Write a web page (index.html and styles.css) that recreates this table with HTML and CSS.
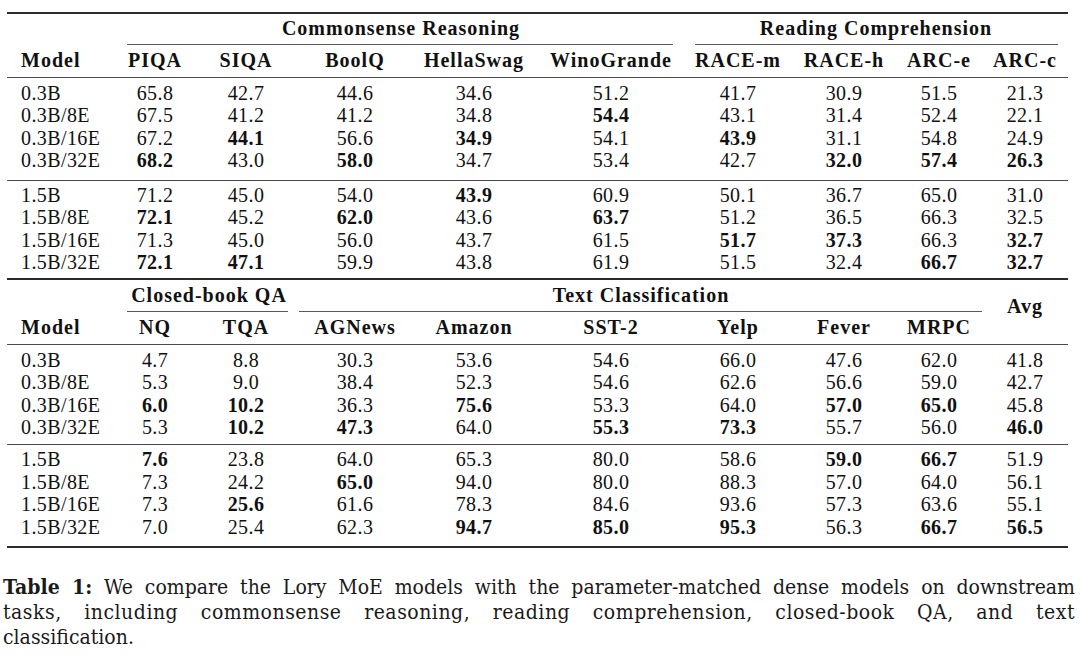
FILE: index.html
```html
<!DOCTYPE html>
<html lang="en">
<head>
<meta charset="utf-8">
<title>Table 1</title>
<link rel="stylesheet" href="styles.css">
</head>
<body>
<div class="page">
  <div class="tbl t1">
    <div class="rule thick top"></div>
    <div class="grid head">
      <div class="grp g-cs">Commonsense Reasoning</div>
      <div class="grp g-rc">Reading Comprehension</div>
      <div class="cmid cm-cs"></div>
      <div class="cmid cm-rc"></div>
      <div class="hd m">Model</div>
      <div class="hd">PIQA</div>
      <div class="hd">SIQA</div>
      <div class="hd">BoolQ</div>
      <div class="hd">HellaSwag</div>
      <div class="hd">WinoGrande</div>
      <div class="hd">RACE-m</div>
      <div class="hd">RACE-h</div>
      <div class="hd">ARC-e</div>
      <div class="hd">ARC-c</div>
    </div>
    <div class="rule mid after-head"></div>
    <div class="body">
      <div class="grid row"><span class="m">0.3B</span><span>65.8</span><span>42.7</span><span>44.6</span><span>34.6</span><span>51.2</span><span>41.7</span><span>30.9</span><span>51.5</span><span>21.3</span></div>
      <div class="grid row"><span class="m">0.3B/8E</span><span>67.5</span><span>41.2</span><span>41.2</span><span>34.8</span><b>54.4</b><span>43.1</span><span>31.4</span><span>52.4</span><span>22.1</span></div>
      <div class="grid row"><span class="m">0.3B/16E</span><span>67.2</span><b>44.1</b><span>56.6</span><b>34.9</b><span>54.1</span><b>43.9</b><span>31.1</span><span>54.8</span><span>24.9</span></div>
      <div class="grid row"><span class="m">0.3B/32E</span><b>68.2</b><span>43.0</span><b>58.0</b><span>34.7</span><span>53.4</span><span>42.7</span><b>32.0</b><b>57.4</b><b>26.3</b></div>
    </div>
    <div class="rule mid between"></div>
    <div class="body">
      <div class="grid row"><span class="m">1.5B</span><span>71.2</span><span>45.0</span><span>54.0</span><b>43.9</b><span>60.9</span><span>50.1</span><span>36.7</span><span>65.0</span><span>31.0</span></div>
      <div class="grid row"><span class="m">1.5B/8E</span><b>72.1</b><span>45.2</span><b>62.0</b><span>43.6</span><b>63.7</b><span>51.2</span><span>36.5</span><span>66.3</span><span>32.5</span></div>
      <div class="grid row"><span class="m">1.5B/16E</span><span>71.3</span><span>45.0</span><span>56.0</span><span>43.7</span><span>61.5</span><b>51.7</b><b>37.3</b><span>66.3</span><b>32.7</b></div>
      <div class="grid row"><span class="m">1.5B/32E</span><b>72.1</b><b>47.1</b><span>59.9</span><span>43.8</span><span>61.9</span><span>51.5</span><span>32.4</span><b>66.7</b><b>32.7</b></div>
    </div>
    <div class="rule thick bottom1"></div>
  </div>

  <div class="tbl t2">
    <div class="grid head">
      <div class="grp g-cb">Closed-book QA</div>
      <div class="grp g-tc">Text Classification</div>
      <div class="hd avg">Avg</div>
      <div class="cmid cm-cb"></div>
      <div class="cmid cm-tc"></div>
      <div class="hd m">Model</div>
      <div class="hd">NQ</div>
      <div class="hd">TQA</div>
      <div class="hd">AGNews</div>
      <div class="hd">Amazon</div>
      <div class="hd">SST-2</div>
      <div class="hd">Yelp</div>
      <div class="hd">Fever</div>
      <div class="hd">MRPC</div>
    </div>
    <div class="rule mid after-head2"></div>
    <div class="body">
      <div class="grid row"><span class="m">0.3B</span><span>4.7</span><span>8.8</span><span>30.3</span><span>53.6</span><span>54.6</span><span>66.0</span><span>47.6</span><span>62.0</span><span>41.8</span></div>
      <div class="grid row"><span class="m">0.3B/8E</span><span>5.3</span><span>9.0</span><span>38.4</span><span>52.3</span><span>54.6</span><span>62.6</span><span>56.6</span><span>59.0</span><span>42.7</span></div>
      <div class="grid row"><span class="m">0.3B/16E</span><b>6.0</b><b>10.2</b><span>36.3</span><b>75.6</b><span>53.3</span><span>64.0</span><b>57.0</b><b>65.0</b><span>45.8</span></div>
      <div class="grid row"><span class="m">0.3B/32E</span><span>5.3</span><b>10.2</b><b>47.3</b><span>64.0</span><b>55.3</b><b>73.3</b><span>55.7</span><span>56.0</span><b>46.0</b></div>
    </div>
    <div class="rule mid between2"></div>
    <div class="body">
      <div class="grid row"><span class="m">1.5B</span><b>7.6</b><span>23.8</span><span>64.0</span><span>65.3</span><span>80.0</span><span>58.6</span><b>59.0</b><b>66.7</b><span>51.9</span></div>
      <div class="grid row"><span class="m">1.5B/8E</span><span>7.3</span><span>24.2</span><b>65.0</b><span>94.0</span><span>80.0</span><span>88.3</span><span>57.0</span><span>64.0</span><span>56.1</span></div>
      <div class="grid row"><span class="m">1.5B/16E</span><span>7.3</span><b>25.6</b><span>61.6</span><span>78.3</span><span>84.6</span><span>93.6</span><span>57.3</span><span>63.6</span><span>55.1</span></div>
      <div class="grid row"><span class="m">1.5B/32E</span><span>7.0</span><span>25.4</span><span>62.3</span><b>94.7</b><b>85.0</b><b>95.3</b><span>56.3</span><b>66.7</b><b>56.5</b></div>
    </div>
    <div class="rule thick bottom2"></div>
  </div>

  <p class="caption">
    <span class="cl full l1"><b>Table 1:</b> We compare the Lory MoE models with the parameter-matched dense models on downstream</span>
    <span class="cl full l2">tasks, including commonsense reasoning, reading comprehension, closed-book QA, and text</span>
    <span class="cl l3">classification.</span>
  </p>
</div>
</body>
</html>
```

FILE: styles.css
```css
* {
  box-sizing: border-box;
  margin: 0;
  padding: 0;
}

html,
body {
  background: #ffffff;
}

body {
  margin: 0;
  width: 1080px;
  height: 658px;
  overflow: hidden;
  color: #111111;
  font-family: "Liberation Serif", "Times New Roman", serif;
}

.page {
  padding-top: 12px;
}

.tbl {
  width: 1061px;
  margin-left: 7px;
  font-size: 20px;
  letter-spacing: 0.4px;
}

.grid {
  display: grid;
  grid-template-columns: 111px 74px 108px 110px 128px 146px 108px 104px 86px 86px;
}

.rule {
  width: 100%;
}

.rule.thick {
  height: 2px;
  background: #2b2b2b;
}

.rule.mid {
  height: 1px;
  background: #4a4a4a;
}

.cmid {
  height: 1px;
  background: #5a5a5a;
  grid-row: 3;
}

/* header blocks */
.head {
  grid-template-rows: 22.5px 4.5px 1px 4px 22.5px;
  margin-top: 3px;
}

.t2 .head {
  margin-top: 3.8px;
  grid-template-rows: 22.5px 5px 1px 4px 22.5px;
}

.grp {
  grid-row: 1;
  text-align: center;
  font-weight: 700;
  letter-spacing: 1px;
  line-height: 22.5px;
  white-space: nowrap;
}

.hd {
  grid-row: 5;
  text-align: center;
  font-weight: 700;
  letter-spacing: 1px;
  line-height: 22.5px;
  white-space: nowrap;
}

.hd.m {
  text-align: left;
  padding-left: 14px;
}

.g-cs { grid-column: 2 / 7; }
.g-rc { grid-column: 7 / 11; }
.cm-cs { grid-column: 2 / 7; margin: 0 11px 0 9px; }
.cm-rc { grid-column: 7 / 11; margin: 0 10px 0 11px; }

.g-cb { grid-column: 2 / 4; }
.g-tc { grid-column: 4 / 10; }
.cm-cb { grid-column: 2 / 4; margin: 0 12px 0 9px; }
.cm-tc { grid-column: 4 / 10; margin: 0 0 0 -1px; }

.hd.avg {
  grid-column: 10;
  grid-row: 1 / 6;
  align-self: start;
  margin-top: 10.8px;
}

.after-head { margin-top: 5.5px; }
.after-head2 { margin-top: 4.7px; }

.body {
  margin-top: 3.5px;
}

.between { margin-top: 8px; }
.between + .body { margin-top: 3px; }

.between2 { margin-top: 5.7px; }
.between2 + .body { margin-top: 3.1px; }

.after-head2 + .body { margin-top: 4.1px; }

.bottom1 { margin-top: 4.6px; }
.bottom2 { margin-top: 8px; }

.row {
  height: 22.5px;
  line-height: 22.5px;
  white-space: nowrap;
}

.row > span,
.row > b {
  text-align: center;
}

.row > b {
  font-weight: 700;
}

.row > .m {
  text-align: left;
  padding-left: 14px;
}

/* caption */
.caption {
  margin: 26px 5px 0 3px;
  font-family: "DejaVu Serif Condensed", "DejaVu Serif", "Liberation Serif", serif;
  font-stretch: condensed;
  font-size: 21px;
  line-height: 25px;
  color: #1a1a1a;
}

.cl {
  display: block;
  white-space: nowrap;
}

.cl.full {
  text-align: justify;
  text-align-last: justify;
}

.cl.l2 {
  letter-spacing: 0.5px;
}

.caption b {
  font-weight: 700;
}
```
